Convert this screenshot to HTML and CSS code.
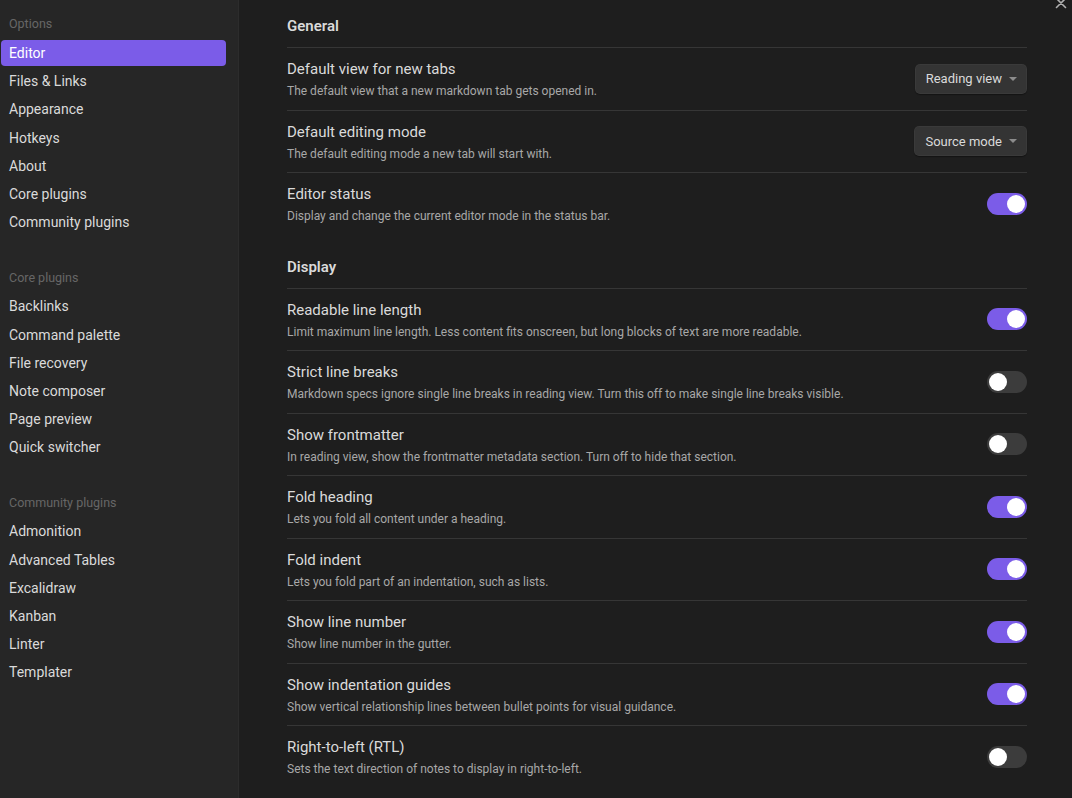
FILE: index.html
```html
<!DOCTYPE html>
<html lang="en">
<head>
<meta charset="utf-8">
<title>Settings</title>
<link rel="stylesheet" href="styles.css">
</head>
<body>
<div class="modal">
  <nav class="sidebar">
    <div class="group">
      <div class="group-title">Options</div>
      <div class="nav-item active">Editor</div>
      <div class="nav-item">Files &amp; Links</div>
      <div class="nav-item">Appearance</div>
      <div class="nav-item">Hotkeys</div>
      <div class="nav-item">About</div>
      <div class="nav-item">Core plugins</div>
      <div class="nav-item">Community plugins</div>
    </div>
    <div class="group">
      <div class="group-title">Core plugins</div>
      <div class="nav-item">Backlinks</div>
      <div class="nav-item">Command palette</div>
      <div class="nav-item">File recovery</div>
      <div class="nav-item">Note composer</div>
      <div class="nav-item">Page preview</div>
      <div class="nav-item">Quick switcher</div>
    </div>
    <div class="group">
      <div class="group-title">Community plugins</div>
      <div class="nav-item">Admonition</div>
      <div class="nav-item">Advanced Tables</div>
      <div class="nav-item">Excalidraw</div>
      <div class="nav-item">Kanban</div>
      <div class="nav-item">Linter</div>
      <div class="nav-item">Templater</div>
    </div>
  </nav>
  <main class="content">
    <div class="heading first">General</div>
    <div class="setting">
      <div class="info">
        <div class="name">Default view for new tabs</div>
        <div class="desc">The default view that a new markdown tab gets opened in.</div>
      </div>
      <div class="dropdown"><span>Reading view</span><span class="caret"></span></div>
    </div>
    <div class="setting">
      <div class="info">
        <div class="name">Default editing mode</div>
        <div class="desc">The default editing mode a new tab will start with.</div>
      </div>
      <div class="dropdown"><span>Source mode</span><span class="caret"></span></div>
    </div>
    <div class="setting">
      <div class="info">
        <div class="name">Editor status</div>
        <div class="desc">Display and change the current editor mode in the status bar.</div>
      </div>
      <div class="toggle on"><span class="knob"></span></div>
    </div>

    <div class="heading">Display</div>
    <div class="setting">
      <div class="info">
        <div class="name">Readable line length</div>
        <div class="desc">Limit maximum line length. Less content fits onscreen, but long blocks of text are more readable.</div>
      </div>
      <div class="toggle on"><span class="knob"></span></div>
    </div>
    <div class="setting">
      <div class="info">
        <div class="name">Strict line breaks</div>
        <div class="desc">Markdown specs ignore single line breaks in reading view. Turn this off to make single line breaks visible.</div>
      </div>
      <div class="toggle"><span class="knob"></span></div>
    </div>
    <div class="setting">
      <div class="info">
        <div class="name">Show frontmatter</div>
        <div class="desc">In reading view, show the frontmatter metadata section. Turn off to hide that section.</div>
      </div>
      <div class="toggle"><span class="knob"></span></div>
    </div>
    <div class="setting">
      <div class="info">
        <div class="name">Fold heading</div>
        <div class="desc">Lets you fold all content under a heading.</div>
      </div>
      <div class="toggle on"><span class="knob"></span></div>
    </div>
    <div class="setting">
      <div class="info">
        <div class="name">Fold indent</div>
        <div class="desc">Lets you fold part of an indentation, such as lists.</div>
      </div>
      <div class="toggle on"><span class="knob"></span></div>
    </div>
    <div class="setting">
      <div class="info">
        <div class="name">Show line number</div>
        <div class="desc">Show line number in the gutter.</div>
      </div>
      <div class="toggle on"><span class="knob"></span></div>
    </div>
    <div class="setting">
      <div class="info">
        <div class="name">Show indentation guides</div>
        <div class="desc">Show vertical relationship lines between bullet points for visual guidance.</div>
      </div>
      <div class="toggle on"><span class="knob"></span></div>
    </div>
    <div class="setting">
      <div class="info">
        <div class="name">Right-to-left (RTL)</div>
        <div class="desc">Sets the text direction of notes to display in right-to-left.</div>
      </div>
      <div class="toggle"><span class="knob"></span></div>
    </div>
  </main>
  <div class="close" aria-label="Close">
    <svg width="12" height="12" viewBox="0 0 12 12"><path d="M1.5 1.5 L10.5 10.5 M10.5 1.5 L1.5 10.5" stroke="#b0b0b0" stroke-width="1.6" stroke-linecap="round" fill="none"/></svg>
  </div>
</div>
</body>
</html>
```
FILE: styles.css
```css
html, body {
  margin: 0;
  padding: 0;
  height: 100%;
  background: #1e1e1e;
  overflow: hidden;
}

body {
  font-family: Roboto, "Liberation Sans", sans-serif;
  color: #dadada;
}

.modal {
  position: relative;
  display: flex;
  height: 100vh;
}

.sidebar {
  width: 225px;
  flex: none;
  background: #262626;
  border-right: 1px solid #2c2c2c;
  padding: 11px 12px 0 1px;
  display: flex;
  flex-direction: column;
  gap: 28px;
}

.group {
  display: flex;
  flex-direction: column;
}

.group-title {
  height: 26px;
  line-height: 26px;
  padding-left: 8px;
  margin-bottom: 2px;
  font-size: 12.5px;
  color: #666666;
}

.group:first-child .group-title {
  margin-bottom: 3px;
}

.nav-item {
  height: 26.2px;
  line-height: 26.2px;
  padding-left: 8px;
  margin-bottom: 2px;
  font-size: 14px;
  color: #dadada;
  border-radius: 4px;
}

.nav-item.active {
  background: #7b5ce8;
  color: #ffffff;
}

.content {
  flex: 1;
  padding: 0 45px 0 48px;
  display: flex;
  flex-direction: column;
}

.heading {
  font-size: 15px;
  font-weight: 600;
  line-height: 20px;
  padding: 22px 0 11px;
  color: #dadada;
}

.heading.first {
  padding-top: 16px;
}

.setting {
  display: flex;
  align-items: center;
  justify-content: space-between;
  border-top: 1px solid #363636;
  padding: 11px 0 9px;
}

.info {
  display: flex;
  flex-direction: column;
}

.name {
  font-size: 15px;
  line-height: 20px;
  color: #dadada;
}

.desc {
  font-size: 12px;
  line-height: 18.5px;
  margin-top: 3px;
  color: #a8a8a8;
}

.dropdown {
  display: flex;
  align-items: center;
  gap: 7px;
  height: 30px;
  box-sizing: border-box;
  padding: 0 10px 0 11px;
  margin-bottom: 2px;
  background: #343434;
  border-radius: 5px;
  box-shadow: 0 1px 1px rgba(0, 0, 0, 0.35), inset 0 0 0 1px rgba(255, 255, 255, 0.03);
  font-size: 13px;
  color: #dadada;
}

.caret {
  width: 0;
  height: 0;
  border-left: 4px solid transparent;
  border-right: 4px solid transparent;
  border-top: 4px solid #8c8c8c;
}

.toggle {
  position: relative;
  width: 40px;
  height: 22px;
  margin-bottom: 2px;
  border-radius: 11px;
  background: #3c3c3c;
  flex: none;
}

.toggle.on {
  background: #7b5ce8;
}

.knob {
  position: absolute;
  top: 2px;
  left: 2px;
  width: 18px;
  height: 18px;
  border-radius: 50%;
  background: #ffffff;
}

.toggle.on .knob {
  left: 20px;
}

.close {
  position: absolute;
  top: -3px;
  right: 5px;
  width: 12px;
  height: 12px;
  line-height: 0;
}
```
